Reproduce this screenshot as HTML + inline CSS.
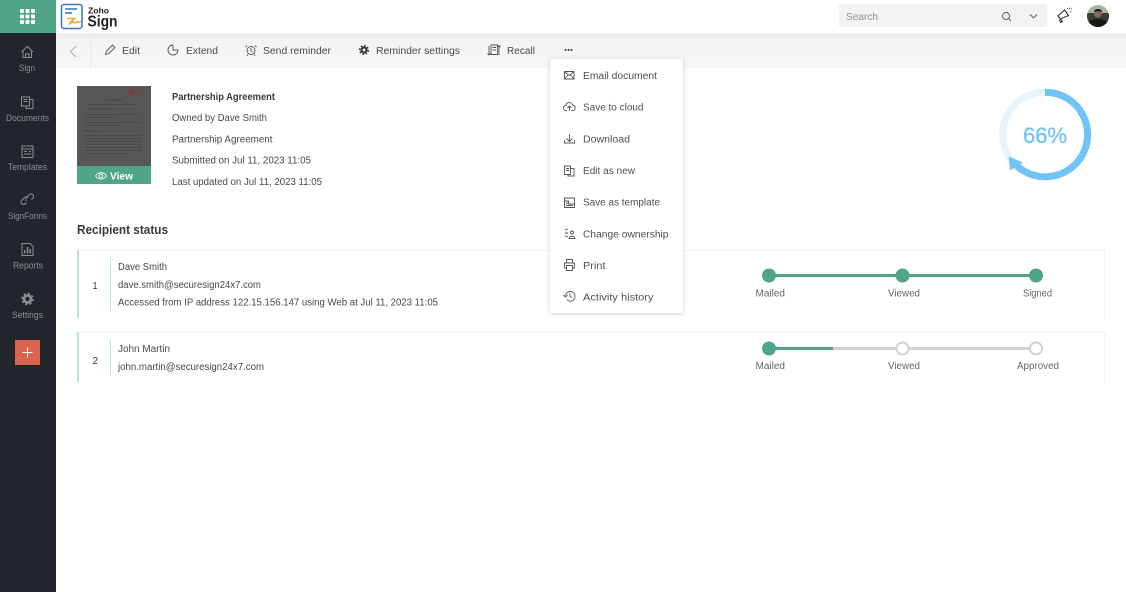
<!DOCTYPE html>
<html><head><meta charset="utf-8"><title>Zoho Sign</title>
<style>
html,body{margin:0;padding:0;background:#fff;width:1126px;height:592px;overflow:hidden}
svg{display:block}
text{font-family:"Liberation Sans",sans-serif;font-size:10px;fill:#484848}
.s text{fill:#8d9095;font-size:9px;text-anchor:start}
.t text{fill:#4a4a4a;font-size:10px}
.m text{fill:#505050;font-size:10px}
.i{fill:none;stroke:#555;stroke-width:.9}
.si{fill:none;stroke:#8d9095;stroke-width:1}
</style></head><body>
<svg width="1126" height="592" viewBox="0 0 1126 592" xmlns="http://www.w3.org/2000/svg">
<defs>
<linearGradient id="tb" x1="0" y1="0" x2="0" y2="1"><stop offset="0" stop-color="#ececec"/><stop offset=".25" stop-color="#f4f4f4"/><stop offset="1" stop-color="#f6f6f6"/></linearGradient>
<filter id="sh" x="-10%" y="-10%" width="120%" height="120%"><feDropShadow dx="0" dy="1" stdDeviation="2" flood-color="#000" flood-opacity=".18"/></filter>
<clipPath id="av"><circle cx="1098" cy="16" r="11"/></clipPath>
</defs>
<rect width="1126" height="592" fill="#fff"/>
<!-- toolbar -->
<rect x="56" y="33" width="1070" height="35" fill="url(#tb)"/>
<rect x="90" y="33" width="1" height="35" fill="#e8e8e8"/>
<path d="M76 46l-5.500 5.500 5.500 5.500" fill="none" stroke="#aaa" stroke-width="1"/>
<!-- sidebar -->
<rect width="56" height="592" fill="#22252b"/>
<rect width="56" height="33" fill="#4fa586"/>
<g fill="#fff"><rect x="20" y="9" width="4" height="4" rx="1"/><rect x="25.500" y="9" width="4" height="4" rx="1"/><rect x="31" y="9" width="4" height="4" rx="1"/><rect x="20" y="14.500" width="4" height="4" rx="1"/><rect x="25.500" y="14.500" width="4" height="4" rx="1"/><rect x="31" y="14.500" width="4" height="4" rx="1"/><rect x="20" y="20" width="4" height="4" rx="1"/><rect x="25.500" y="20" width="4" height="4" rx="1"/><rect x="31" y="20" width="4" height="4" rx="1"/></g>
<g class="si">
<path d="M21.500 52l5.800-5.500 5.800 5.500M23 51v6.500h8.500V51M25.500 57.500v-3.500h3.500v3.500"/>
<path d="M21.500 97h8v9h-8zM23.500 99.500h4M23.500 101.500h4M29.500 99.500h3.500v9h-7v-2.500"/>
<path d="M22 146h11v11.500H22zM22 149h11M24 151.500h3M24 154h7M29 151.500h2"/>
<path d="M24.500 201.500l-1.500 1.500a2.500 2.500 0 0 1-3.500-3.500l3-3a2.500 2.500 0 0 1 3.500 0M29.500 198.500l1.500-1.500a2.500 2.500 0 0 0-3.500-3.500l-3 3a2.500 2.500 0 0 0 0 3.500" transform="translate(2 1)"/>
<path d="M22 243.500h8l3 3v9H22z"/>
</g>
<g fill="#8d9095"><rect x="24" y="250" width="1.500" height="3.500"/><rect x="26.800" y="247" width="1.500" height="6.500"/><rect x="29.500" y="249" width="1.500" height="4.500"/></g>
<circle cx="27.500" cy="299" r="3.500" fill="none" stroke="#8d9095" stroke-width="2.600"/>
<circle cx="27.500" cy="299" r="5.500" fill="none" stroke="#8d9095" stroke-width="1.600" stroke-dasharray="2.200 2.120"/>
<g class="s">
<text x="19" y="71" textLength="16" lengthAdjust="spacingAndGlyphs">Sign</text>
<text x="6" y="121" textLength="43" lengthAdjust="spacingAndGlyphs">Documents</text>
<text x="8" y="170" textLength="39" lengthAdjust="spacingAndGlyphs">Templates</text>
<text x="8" y="219" textLength="39" lengthAdjust="spacingAndGlyphs">SignForms</text>
<text x="13" y="268.500" textLength="30" lengthAdjust="spacingAndGlyphs">Reports</text>
<text x="12" y="318" textLength="31" lengthAdjust="spacingAndGlyphs">Settings</text>
</g>
<rect x="15" y="340" width="25" height="25" fill="#d9644f"/>
<path d="M27.500 347.500v10M22.500 352.500h10" stroke="#fff" stroke-width="1"/>
<!-- logo -->
<rect x="61.500" y="4.500" width="20.500" height="24" rx="2.500" fill="#fff" stroke="#3d73b8" stroke-width="1.500"/>
<path d="M65 9h12M65 13h7" stroke="#3d73b8" stroke-width="1.500" fill="none"/>
<path d="M67 18.500h7.500c-2 1.500-4 3.500-4.800 5.500 2-1.500 3-2.800 3.800-2s1 1.500 2 .5 1.500-1 2.500-.5 2 0 3-.8" fill="none" stroke="#f0a732" stroke-width="1.500"/>
<text x="88" y="13.500" textLength="21" lengthAdjust="spacingAndGlyphs" style="font-size:8px;font-weight:700;fill:#222">Zoho</text>
<text x="87.500" y="26.500" textLength="30" lengthAdjust="spacingAndGlyphs" style="font-size:16px;font-weight:700;fill:#222">Sign</text>
<!-- search -->
<rect x="839" y="4" width="208" height="23" fill="#f3f3f3"/>
<text x="846" y="20" textLength="32" lengthAdjust="spacingAndGlyphs" style="font-size:10.500px;fill:#909090">Search</text>
<circle cx="1006" cy="16" r="3.500" class="i"/><path d="M1008.500 18.500l2.500 2.500" class="i"/>
<path d="M1030 14.500l3.500 3.500 3.500-3.500" class="i"/>
<path d="M1058 16l6.500-6 4 5.500-8 3.500zM1060.500 19l2 2.500-1.500 1-2-3M1064.500 10l4 5.500" fill="none" stroke="#333" stroke-width="1.100"/>
<path d="M1067 9l1-1M1070 12l1.500-.5M1069 9.500l1-2M1071 9l1-.5" stroke="#555" stroke-width=".8"/>
<g clip-path="url(#av)"><rect x="1087" y="5" width="22" height="22" fill="#a8b2a0"/><rect x="1087" y="13" width="22" height="14" fill="#3a3d2f"/><path d="M1087 27c0-6 5-8 11-8s11 2 11 8z" fill="#15171a"/><circle cx="1098" cy="13.500" r="4" fill="#8a6a58"/><path d="M1094 12c0-4 8-4 8 0-2-1-6-1-8 0z" fill="#16181a"/></g>
<!-- toolbar items -->
<g class="i" stroke-width="1">
<path d="M105.500 54.500l1-3.500 6-6 2.500 2.500-6 6z"/>
<path d="M173 45.500a5 5 0 1 0 5 5h-5z" transform="translate(0 -.5)"/>
<circle cx="251" cy="50.500" r="4"/><path d="M251 48v2.500l1.500 1.500M247 45.500l-1.500 1.500M255 45.500l1.500 1.500M248 54.500l-1 1.500M254 54.500l1 1.500"/>
<path d="M491 45h6.500v9.500H491zM492.500 47.500h3.500M492.500 50h3.500M489 46v9M487.500 53.500l1.500 1.500 1.500-1.500M499 55v-9M497.500 47l1.500-1.500 1.500 1.500"/>
</g>
<circle cx="364" cy="50" r="2.500" fill="none" stroke="#333" stroke-width="2"/>
<circle cx="364" cy="50" r="4.300" fill="none" stroke="#333" stroke-width="1.500" stroke-dasharray="1.700 1.670"/>
<g fill="#333"><circle cx="565.500" cy="50" r="1"/><circle cx="568.500" cy="50" r="1"/><circle cx="571.500" cy="50" r="1"/></g>
<g class="t">
<text x="122" y="54" textLength="18" lengthAdjust="spacingAndGlyphs">Edit</text>
<text x="186" y="54" textLength="32" lengthAdjust="spacingAndGlyphs">Extend</text>
<text x="263" y="54" textLength="68" lengthAdjust="spacingAndGlyphs">Send reminder</text>
<text x="376" y="54" textLength="84" lengthAdjust="spacingAndGlyphs">Reminder settings</text>
<text x="507" y="54" textLength="28" lengthAdjust="spacingAndGlyphs">Recall</text>
</g>
<!-- thumbnail -->
<rect x="77" y="86" width="74" height="80" fill="#575757"/>
<rect x="129" y="89" width="5" height="6" fill="#7e3c34"/><rect x="134.500" y="91" width="7" height="2.500" fill="#6b4a46"/>
<g fill="#4a4a4a">
<rect x="105" y="99" width="17" height="1.500"/><rect x="88" y="104" width="50" height="1"/><rect x="88" y="108" width="24" height="1"/>
<rect x="85" y="114" width="54" height="1"/><rect x="85" y="117" width="30" height="1"/>
<rect x="85" y="122" width="56" height="1"/><rect x="85" y="125" width="36" height="1"/>
<rect x="85" y="131" width="17" height="1"/>
<rect x="85" y="135" width="57" height="1"/><rect x="85" y="138" width="57" height="1"/><rect x="85" y="141" width="57" height="1"/><rect x="85" y="144" width="57" height="1"/><rect x="85" y="147" width="57" height="1"/><rect x="85" y="150" width="57" height="1"/><rect x="85" y="153" width="42" height="1"/>
</g>
<rect x="77" y="166" width="74" height="18" fill="#4fa586"/>
<path d="M95.500 176c3-4.500 8-4.500 11 0-3 4-8 4-11 0z" fill="none" stroke="#fff" stroke-width=".9"/><circle cx="101" cy="176" r="1.800" fill="none" stroke="#fff" stroke-width=".9"/>
<text x="110" y="179.500" textLength="23" lengthAdjust="spacingAndGlyphs" style="fill:#fff;font-weight:700">View</text>
<!-- details -->
<text x="172" y="100" textLength="103" lengthAdjust="spacingAndGlyphs" style="font-weight:700;fill:#3a3a3a">Partnership Agreement</text>
<text x="172" y="121" textLength="95" lengthAdjust="spacingAndGlyphs">Owned by Dave Smith</text>
<text x="172" y="142.500" textLength="100.500" lengthAdjust="spacingAndGlyphs">Partnership Agreement</text>
<text x="172" y="163.500" textLength="139" lengthAdjust="spacingAndGlyphs">Submitted on Jul 11, 2023 11:05</text>
<text x="172" y="185" textLength="150" lengthAdjust="spacingAndGlyphs">Last updated on Jul 11, 2023 11:05</text>
<!-- ring -->
<circle cx="1045" cy="134.500" r="42.300" fill="none" stroke="#e6f4fc" stroke-width="7"/>
<path d="M1045 92.200A42.300 42.300 0 1 1 1016 165" fill="none" stroke="#6fc3f5" stroke-width="7"/>
<path d="M1008.700 156.500L1010 170.500 1023 162.500z" fill="#6fc3f5"/>
<text x="1023" y="143" textLength="44" lengthAdjust="spacingAndGlyphs" style="font-size:22px;fill:#6fc3f5;stroke:#6fc3f5;stroke-width:.3">66%</text>
<!-- recipients -->
<text x="77" y="234" textLength="91" lengthAdjust="spacingAndGlyphs" style="font-size:12.500px;font-weight:700;fill:#3a3a3a">Recipient status</text>
<path d="M77 250.500H1104.500V318M77 332.500H1104.500V382" fill="none" stroke="#f3f3f3"/>
<rect x="77" y="250" width="2" height="68" fill="#b5e3d4"/>
<rect x="77" y="332" width="2" height="50" fill="#b5e3d4"/>
<rect x="110" y="258" width="1" height="53" fill="#b5e3d4"/>
<rect x="110" y="340" width="1" height="35" fill="#b5e3d4"/>
<text x="92.500" y="289" textLength="5" lengthAdjust="spacingAndGlyphs" style="fill:#333">1</text>
<text x="92.500" y="364" textLength="5.500" lengthAdjust="spacingAndGlyphs" style="fill:#333">2</text>
<text x="118" y="270" textLength="49" lengthAdjust="spacingAndGlyphs">Dave Smith</text>
<text x="118" y="288" textLength="143" lengthAdjust="spacingAndGlyphs">dave.smith@securesign24x7.com</text>
<text x="118" y="305.500" textLength="320" lengthAdjust="spacingAndGlyphs">Accessed from IP address 122.15.156.147 using Web at Jul 11, 2023 11:05</text>
<text x="118" y="352" textLength="52" lengthAdjust="spacingAndGlyphs">John Martin</text>
<text x="118" y="370" textLength="146" lengthAdjust="spacingAndGlyphs">john.martin@securesign24x7.com</text>
<!-- progress -->
<rect x="769" y="274" width="267" height="3" fill="#4fa586"/>
<g fill="#4fa586"><circle cx="769" cy="275.500" r="7"/><circle cx="902.500" cy="275.500" r="7"/><circle cx="1036" cy="275.500" r="7"/></g>
<rect x="769" y="347" width="267" height="3" fill="#d2d2d2"/>
<rect x="769" y="347" width="64" height="3" fill="#4fa586"/>
<circle cx="769" cy="348.500" r="7" fill="#4fa586"/>
<circle cx="902.500" cy="348.500" r="6" fill="#fff" stroke="#d2d2d2" stroke-width="2"/>
<circle cx="1036" cy="348.500" r="6" fill="#fff" stroke="#d2d2d2" stroke-width="2"/>
<g>
<text x="755.500" y="296.500" textLength="29.500" lengthAdjust="spacingAndGlyphs" style="fill:#666">Mailed</text>
<text x="888" y="296.500" textLength="32" lengthAdjust="spacingAndGlyphs" style="fill:#666">Viewed</text>
<text x="1023" y="296.500" textLength="29" lengthAdjust="spacingAndGlyphs" style="fill:#666">Signed</text>
<text x="755.500" y="369" textLength="29.500" lengthAdjust="spacingAndGlyphs" style="fill:#666">Mailed</text>
<text x="888" y="369" textLength="32" lengthAdjust="spacingAndGlyphs" style="fill:#666">Viewed</text>
<text x="1017" y="369" textLength="42" lengthAdjust="spacingAndGlyphs" style="fill:#666">Approved</text>
</g>
<!-- menu -->
<rect x="550" y="59" width="133" height="254" fill="#fff" filter="url(#sh)"/>
<g class="i">
<path d="M564.500 71.500h9.500v7.500h-9.500zM564.500 71.500l4.750 4 4.750-4M564.500 79l3.500-4M574 79l-3.500-4"/>
<path d="M567 110.500h-1a2.500 2.500 0 0 1-.3-5 3.500 3.500 0 0 1 6.800-.5 2.800 2.800 0 0 1 .5 5.500h-1.500M569.500 111v-5M567.500 108l2-2 2 2"/>
<path d="M569.500 134v7M566.500 138.500l3 3 3-3M564.500 140v3h10v-3"/>
<path d="M564.500 166h6v8.500h-6zM566 168.500h3M566 170.500h3M570.500 168.500h3.500v7.500h-6v-1.500"/>
<path d="M564.500 198h10v9.500h-10zM564.500 201h4v3h6M566 203h2M566 205.500h7"/>
<circle cx="572" cy="232.500" r="1.500"/><path d="M569 238.500c0-3 6-3 6 0zM565 230.500a2 2 0 0 1 3-1M565 235.500a2 2 0 0 0 3 1M568 233h-3"/>
<path d="M566.500 263v-3.500h6v3.500M564.500 268v-5h10v5h-2M566.500 268h-2M566.500 265.500h6v5h-6z"/>
<path d="M565.500 295.500a4.800 4.800 0 1 1 1.300 4.200M563.500 295l2 2 2-2M570 293.500v3l2 1"/>
</g>
<g class="m">
<text x="583" y="79" textLength="74" lengthAdjust="spacingAndGlyphs">Email document</text>
<text x="583" y="110.500" textLength="60.500" lengthAdjust="spacingAndGlyphs">Save to cloud</text>
<text x="583" y="142.500" textLength="47" lengthAdjust="spacingAndGlyphs">Download</text>
<text x="583" y="174" textLength="52" lengthAdjust="spacingAndGlyphs">Edit as new</text>
<text x="583" y="205.500" textLength="77" lengthAdjust="spacingAndGlyphs">Save as template</text>
<text x="583" y="237.500" textLength="85.500" lengthAdjust="spacingAndGlyphs">Change ownership</text>
<text x="583" y="269" textLength="22.500" lengthAdjust="spacingAndGlyphs">Print</text>
<text x="583" y="300.500" textLength="70.500" lengthAdjust="spacingAndGlyphs">Activity history</text>
</g>
</svg>
</body></html>
